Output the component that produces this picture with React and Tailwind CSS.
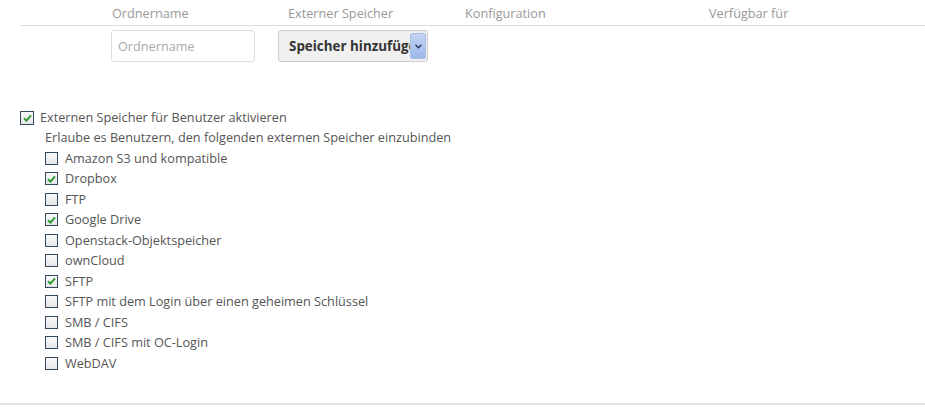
import { useState } from 'react';

const backends = [
  { id: 'amazons3', name: 'Amazon S3 und kompatible', on: false },
  { id: 'dropbox', name: 'Dropbox', on: true },
  { id: 'ftp', name: 'FTP', on: false },
  { id: 'googledrive', name: 'Google Drive', on: true },
  { id: 'swift', name: 'Openstack-Objektspeicher', on: false },
  { id: 'owncloud', name: 'ownCloud', on: false },
  { id: 'sftp', name: 'SFTP', on: true },
  { id: 'sftp_key', name: 'SFTP mit dem Login über einen geheimen Schlüssel', on: false },
  { id: 'smb', name: 'SMB / CIFS', on: false },
  { id: 'smb_oc', name: 'SMB / CIFS mit OC-Login', on: false },
  { id: 'dav', name: 'WebDAV', on: false },
];

function Check({ checked, onClick, small }) {
  return (
    <span
      onClick={onClick}
      className={`inline-flex items-center justify-center shrink-0 border border-[#34495e] bg-gradient-to-b from-[#fafafa] to-[#e6e6e6] cursor-pointer ${
        small ? 'w-[13px] h-[13px]' : 'w-[14px] h-[14px]'
      }`}
    >
      {checked && (
        <svg width="9" height="8" viewBox="0 0 9 8">
          <path d="M1 4.2 L3.4 6.6 L8 1.4" fill="none" stroke="#2f9a32" strokeWidth="2" />
        </svg>
      )}
    </span>
  );
}

export default function App() {
  const [enabled, setEnabled] = useState(true);
  const [allowed, setAllowed] = useState(() => Object.fromEntries(backends.map((b) => [b.id, b.on])));

  return (
    <div className="w-[925px] h-[414px] bg-white text-[12.7px] text-[#555] font-['Open_Sans',sans-serif] overflow-hidden">
      {/* Mount table */}
      <div className="ml-[20px] flex h-[26px] items-end border-b border-[#ddd] text-[#999]">
        <div className="w-[92px]" />
        <div className="w-[176px] pb-[2px]">Ordnername</div>
        <div className="w-[177px] pb-[2px]">Externer Speicher</div>
        <div className="w-[244px] pb-[2px]">Konfiguration</div>
        <div className="pb-[2px]">Verfügbar für</div>
      </div>
      <div className="ml-[111px] mt-[4px] flex gap-[23px]">
        <input
          placeholder="Ordnername"
          className="w-[144px] h-[32px] rounded-[3px] border border-[#ddd] px-[6px] text-[12.7px] placeholder:text-[#aaa] outline-none"
        />
        <div className="w-[150px] h-[32px] rounded-[3px] border border-[#ccc] bg-[#f0f0f0] flex items-center pl-[10px] pr-[1px]">
          <span className="flex-1 overflow-hidden whitespace-nowrap font-bold text-[13.4px] text-[#333]">Speicher hinzufügen</span>
          <span className="w-[16px] h-[26px] rounded-[2px] border border-[#a9bde0] bg-gradient-to-b from-[#c3d4f4] to-[#9eb8ea] flex items-center justify-center">
            <svg width="7" height="5" viewBox="0 0 7 5">
              <path d="M0.5 0.8 L3.5 3.8 L6.5 0.8" fill="none" stroke="#2a3a5a" strokeWidth="1.5" />
            </svg>
          </span>
        </div>
      </div>

      {/* User mounting */}
      <div className="mt-[46px] ml-[20px]">
        <label className="flex items-center gap-[6px] h-[20px]">
          <Check checked={enabled} onClick={() => setEnabled(!enabled)} />
          <span>Externen Speicher für Benutzer aktivieren</span>
        </label>
        <div className="ml-[25px] h-[20px] flex items-center">Erlaube es Benutzern, den folgenden externen Speicher einzubinden</div>
        <div className="ml-[25px] flex flex-col">
          {backends.map((b) => (
            <label key={b.id} className="flex items-center gap-[7px] h-[20.5px]">
              <Check small checked={allowed[b.id]} onClick={() => setAllowed({ ...allowed, [b.id]: !allowed[b.id] })} />
              <span>{b.name}</span>
            </label>
          ))}
        </div>
      </div>
      <div className="mt-[29px] border-t-2 border-[#e2e2e2]" />
    </div>
  );
}
